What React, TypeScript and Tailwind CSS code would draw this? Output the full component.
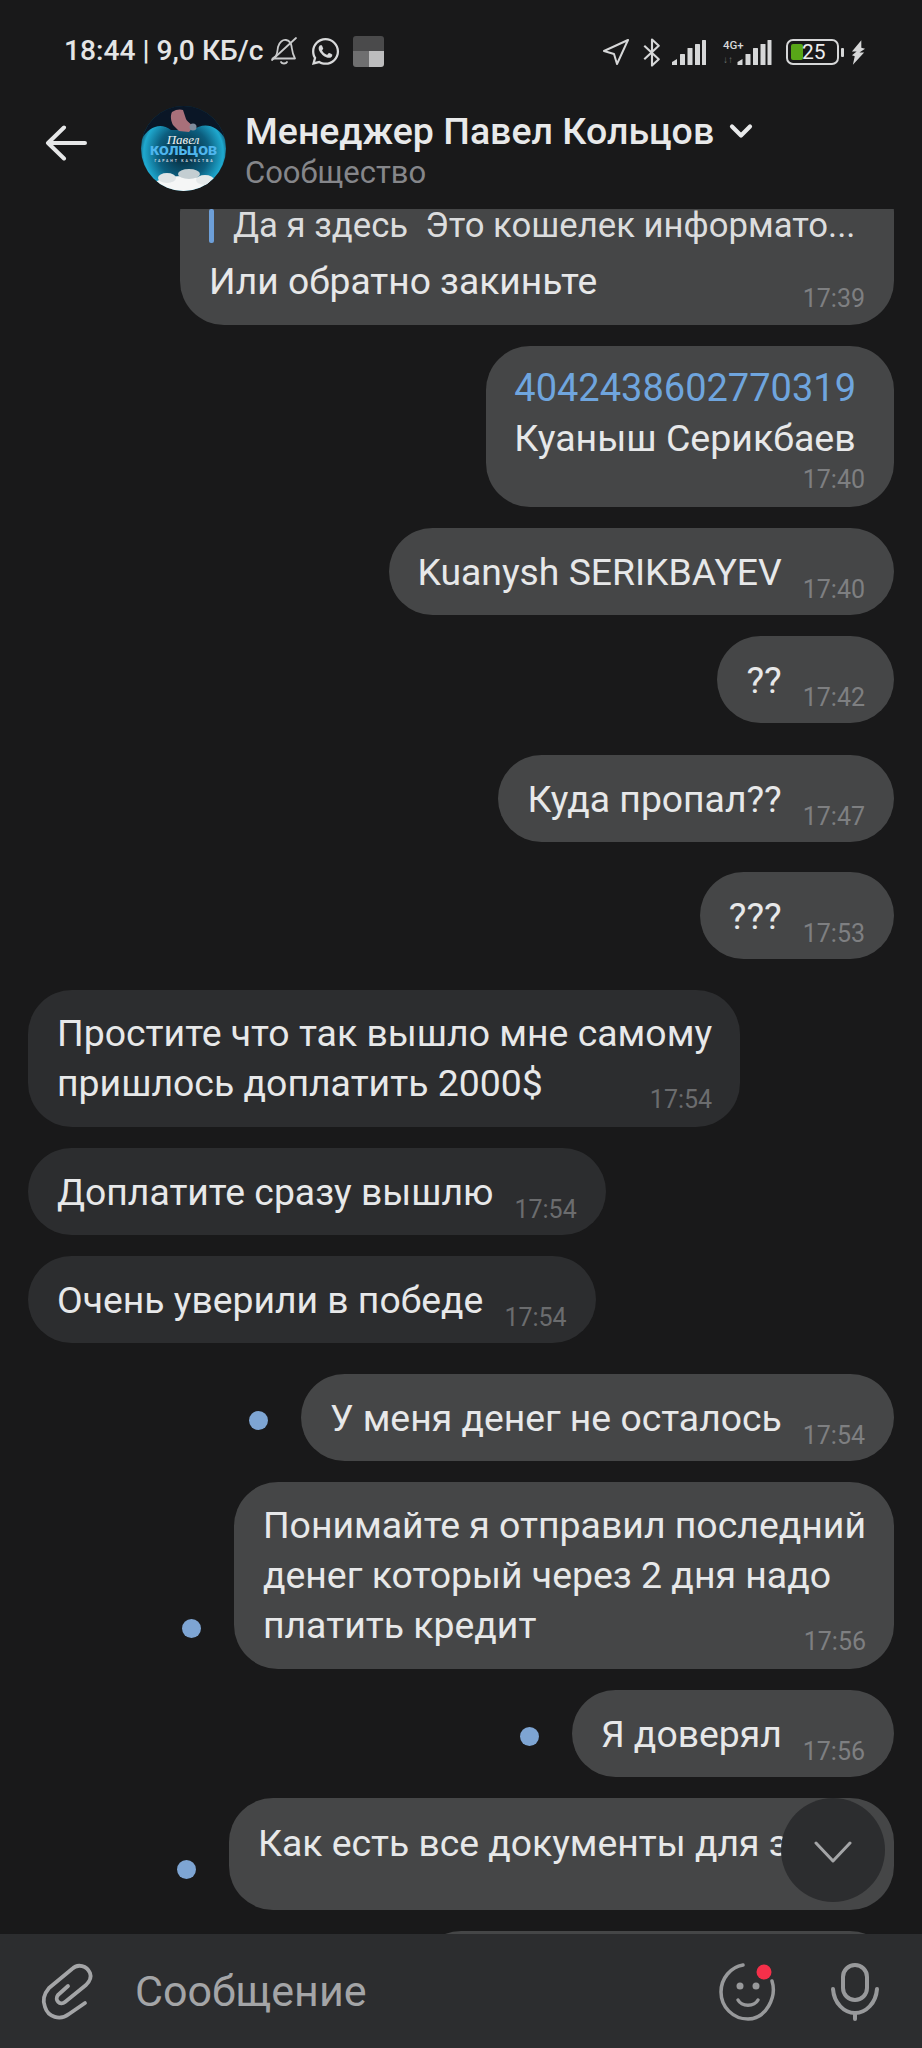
import { ChevronDown } from "lucide-react"
import { FaWhatsapp } from "react-icons/fa"

const font = "font-['Roboto',sans-serif]"

function Signal({ className = "" }: { className?: string }) {
  return (
    <svg viewBox="0 0 34 25" className={className} fill="#d6d7d8">
      <path d="M0 25v-3l5-3v6z" />
      <rect x="8" y="14" width="5" height="11" rx="0.5" />
      <rect x="15.500" y="8" width="5" height="17" rx="0.5" />
      <rect x="23" y="4" width="5" height="21" rx="0.5" />
      <rect x="30" y="0" width="4" height="25" rx="0.5" />
    </svg>
  )
}

function StatusBar() {
  return (
    <div className="h-[66px] pt-[34px] pl-[64px] pr-[56px] flex items-start justify-between">
      <div className="flex items-center h-[34px]">
        <span className="text-[28.2px] leading-[34px] font-medium text-[#e4e5e6] whitespace-pre">18:44 | 9,0 КБ/с</span>
        <svg viewBox="0 0 28 30" className="ml-[7px] w-[28px] h-[30px]" fill="none" stroke="#c9cacb" strokeWidth="1.8" strokeLinejoin="round" strokeLinecap="round">
          <path d="M6 20c1.500-3 1.500-6 2-9 1-5 5-7.500 8-7 3 .5 5 3 5.500 6 .5 3 .5 7 3.500 12.500H2.500C4 21.500 5 21 6 20z" />
          <path d="M2 24 26 2" />
          <path d="M11 26c1 2 5 2 6 0" />
        </svg>
        <FaWhatsapp className="ml-[12px] w-[31px] h-[31px] text-[#d8d9da]" />
        <div className="ml-[12px] w-[31px] h-[31px] rounded-[3px] overflow-hidden grid grid-cols-2 grid-rows-2">
          <div className="col-span-2 bg-[#4a4a4b]" />
          <div className="bg-[#6f6f70]" />
          <div className="bg-[#bdbdbe]" />
        </div>
      </div>
      <div className="flex items-center h-[34px] pt-[2px]">
        <svg viewBox="0 0 26 26" className="w-[26px] h-[26px]" fill="none" stroke="#d6d7d8" strokeWidth="2" strokeLinejoin="round">
          <path d="M25 1 1 12l10 3 3 10z" />
        </svg>
        <svg viewBox="0 0 18 30" className="ml-[14px] w-[18px] h-[29px]" fill="none" stroke="#d6d7d8" strokeWidth="2.200" strokeLinejoin="round">
          <path d="M1 8l15 14-7 6.500V1.500L16 8 1 22" />
        </svg>
        <Signal className="ml-[11px] w-[34px] h-[25px]" />
        <div className="ml-[17px] relative w-[49px] h-[25px]">
          <span className="absolute left-0 -top-[1px] text-[11.5px] leading-[12px] font-medium text-[#d6d7d8]">4G+</span>
          <span className="absolute left-0 bottom-0 text-[10px] leading-[10px] text-[#6f7071]">↓↑</span>
          <Signal className="absolute right-0 bottom-0 w-[35px] h-[25px]" />
        </div>
        <div className="ml-[14px] w-[53px] h-[26px] rounded-[7px] border-[2.500px] border-[#d6d7d8] flex items-center px-[3px]">
          <div className="w-[12px] h-[16px] bg-[#58a618] rounded-[2px]" />
          <span className="text-[21px] leading-[21px] text-[#eeeeef] -ml-[1px]">25</span>
        </div>
        <div className="ml-[2px] w-[3px] h-[9px] bg-[#d6d7d8] rounded-[1px]" />
        <svg viewBox="0 0 16 26" className="ml-[7px] w-[15px] h-[25px]" fill="#d6d7d8">
          <path d="M11 0 1 12h5L1 16l3 1-2 9 12-13H9l6-4-4-1z" />
        </svg>
      </div>
    </div>
  )
}

function Avatar() {
  return (
    <svg viewBox="0 0 85 85" className="w-[85px] h-[85px] shrink-0 rounded-full">
      <defs>
        <radialGradient id="glow" cx="50%" cy="55%" r="55%">
          <stop offset="0%" stopColor="#06202e" />
          <stop offset="55%" stopColor="#0c5f80" />
          <stop offset="85%" stopColor="#1fa9cf" />
          <stop offset="100%" stopColor="#0a3a50" />
        </radialGradient>
      </defs>
      <rect width="85" height="85" fill="url(#glow)" />
      <path d="M0 0h85v34C76 18 62 16 52 24L30 24C20 16 8 20 0 34z" fill="#0a1626" />
      <path d="M31 6c4-3 9-3 11-2l3 9c1 3 6 5 7 8l-4 5-10-1-6-6c-2-4-3-9-1-13z" fill="#a8707a" />
      <circle cx="52" cy="21" r="3.500" fill="#7f8b9c" />
      <text x="42" y="38" textAnchor="middle" fontFamily="Liberation Serif, serif" fontStyle="italic" fontSize="13" fill="#f2f2f2">Павел</text>
      <text x="42.500" y="49" textAnchor="middle" fontFamily="Roboto, sans-serif" fontWeight="900" fontSize="12" fill="#4fb6ee" textLength="67" lengthAdjust="spacingAndGlyphs">КОЛЬЦОВ</text>
      <text x="42.500" y="55.500" textAnchor="middle" fontFamily="Roboto, sans-serif" fontWeight="700" fontSize="3.500" fill="#d5dde3" textLength="58" lengthAdjust="spacing">ГАРАНТ КАЧЕСТВА</text>
      <ellipse cx="42" cy="82" rx="32" ry="12" fill="#f5f6f6" />
      <ellipse cx="26" cy="72" rx="9" ry="5" fill="#dfe4e6" />
      <ellipse cx="48" cy="68" rx="11" ry="5" fill="#c4ced2" />
      <ellipse cx="64" cy="74" rx="9" ry="5" fill="#e5e9ea" />
    </svg>
  )
}

function Header() {
  return (
    <div className="h-[143px] flex items-start pl-[45px]">
      <svg viewBox="0 0 42 36" className="mt-[59px] w-[42px] h-[36px] shrink-0" fill="none" stroke="#e6e7e8" strokeWidth="4" strokeLinecap="round" strokeLinejoin="round">
        <path d="M3 18h37M19 2.500 3 18l16 15.500" />
      </svg>
      <div className="ml-[54px] mt-[40px]">
        <Avatar />
      </div>
      <div className="ml-[19px] mt-[44px]">
        <div className="flex items-center h-[42px]">
          <span className="text-[37.5px] leading-[42px] font-medium text-[#e8e9ea] whitespace-nowrap">Менеджер Павел Кольцов</span>
          <ChevronDown className="ml-[9px] w-[36px] h-[36px] text-[#e8e9ea]" strokeWidth={2.8} />
        </div>
        <div className="text-[31px] leading-[36px] text-[#85868a] mt-[3px] whitespace-nowrap">Сообщество</div>
      </div>
    </div>
  )
}

function Time({ side, children }: { side: "in" | "out"; children: string }) {
  return (
    <span className={`block text-[25px] leading-[30px] shrink-0 whitespace-nowrap ${side === "out" ? "text-[#7e7f81]" : "text-[#6b6c6e]"}`}>
      {children}
    </span>
  )
}

function Dot() {
  return <div className="w-[19px] h-[19px] rounded-full bg-[#7ea5d3] mb-[31px]" />
}

type BubbleProps = {
  side: "in" | "out"
  time: string
  lines: string[]
  dot?: boolean
}

function Bubble({ side, time, lines, dot }: BubbleProps) {
  const bg = side === "out" ? "bg-[#454647]" : "bg-[#2c2d2f]"
  const row = side === "out" ? "justify-end pr-[28px]" : "justify-start pl-[28px]"

  if (lines.length === 1) {
    return (
      <div className={`flex items-end gap-[33px] ${row}`}>
        {dot && <Dot />}
        <div className={`${bg} h-[87px] rounded-[44px] pl-[29px] pr-[29px] flex`}>
          <span className="text-[37.3px] leading-[50px] mt-[19px] text-[#e7e8e9] whitespace-pre">{lines[0]}</span>
          <span className="ml-[21px] mt-[47px]"><Time side={side}>{time}</Time></span>
        </div>
      </div>
    )
  }

  return (
    <div className={`flex items-end gap-[33px] ${row}`}>
      {dot && <Dot />}
      <div className={`${bg} rounded-[44px] pl-[29px] pr-[28px] pt-[18px] pb-[12px] flex flex-col`}>
        {lines.map((l) => (
          <div key={l} className="text-[37.4px] leading-[50px] text-[#e7e8e9] whitespace-pre">{l}</div>
        ))}
        <div className="self-end -mt-[23px]"><Time side={side}>{time}</Time></div>
      </div>
    </div>
  )
}

function Messages() {
  return (
    <div className="flex-1 min-h-0 overflow-hidden flex flex-col">
      <div className="flex justify-end pr-[28px] -mt-[40px]">
        <div className="bg-[#454647] w-[714px] rounded-[44px] pl-[29px] pr-[29px] pt-[40px] pb-[11px] flex flex-col">
          <div className="flex items-start h-[34px]">
            <div className="w-[5px] h-[34px] bg-[#6d9fd8] rounded-[2px]" />
            <span className="ml-[19px] text-[34.7px] leading-[32px] text-[#dcddde] whitespace-pre">Да я здесь  Это кошелек информато...</span>
          </div>
          <div className="mt-[13px] text-[37.2px] leading-[50px] text-[#e7e8e9]">Или обратно закиньте</div>
          <div className="self-end -mt-[22px]"><Time side="out">17:39</Time></div>
        </div>
      </div>

      <div className="mt-[21px] flex justify-end pr-[28px]">
        <div className="bg-[#454647] rounded-[44px] pl-[28px] pr-[38px] pt-[17px] pb-[12px] flex flex-col">
          <div className="text-[38px] leading-[50px] text-[#6fa5de] whitespace-pre">4042438602770319</div>
          <div className="text-[37.5px] leading-[50px] text-[#e7e8e9] whitespace-pre">Куаныш Серикбаев</div>
          <div className="self-end -mr-[9px] mt-[2px]"><Time side="out">17:40</Time></div>
        </div>
      </div>

      <div className="mt-[21px] flex flex-col gap-[21px]">
        <Bubble side="out" lines={["Kuanysh SERIKBAYEV"]} time="17:40" />
        <Bubble side="out" lines={["??"]} time="17:42" />
      </div>
      <div className="mt-[32px]">
        <Bubble side="out" lines={["Куда пропал??"]} time="17:47" />
      </div>
      <div className="mt-[30px]">
        <Bubble side="out" lines={["???"]} time="17:53" />
      </div>

      <div className="mt-[31px] flex flex-col gap-[21px]">
        <Bubble side="in" lines={["Простите что так вышло мне самому", "пришлось доплатить 2000$"]} time="17:54" />
        <Bubble side="in" lines={["Доплатите сразу вышлю"]} time="17:54" />
        <Bubble side="in" lines={["Очень уверили в победе"]} time="17:54" />
      </div>

      <div className="mt-[31px] flex flex-col gap-[21px]">
        <Bubble side="out" dot lines={["У меня денег не осталось"]} time="17:54" />
        <Bubble side="out" dot lines={["Понимайте я отправил последний", "денег который через 2 дня надо", "платить кредит"]} time="17:56" />
        <Bubble side="out" dot lines={["Я доверял"]} time="17:56" />
        <div className="flex items-end justify-end gap-[33px] pr-[28px]">
          <Dot />
          <div className="bg-[#454647] w-[665px] h-[112px] rounded-[44px] pl-[29px] pt-[20px]">
            <span className="block text-[37.3px] leading-[50px] text-[#e7e8e9] whitespace-pre">Как есть все документы для з</span>
          </div>
        </div>
        <div className="self-end mr-[28px] bg-[#454647] w-[477px] h-[60px] rounded-t-[44px]" />
      </div>
    </div>
  )
}

function Footer() {
  return (
    <div className="h-[114px] shrink-0 bg-[#2c2d2f] flex items-center pl-[30px] pr-[42px]">
      <svg viewBox="0 0 80 80" className="w-[80px] h-[80px] shrink-0" fill="none" stroke="#a4a5a7" strokeWidth="3.800" strokeLinecap="round" strokeLinejoin="round">
        <path d="M55 52 39 63C30 70 18 66 15 56 12 49 14 43 19 37L42 18C48 12 57 15 60 22 62 27 59 31 56 34L35 51C30 55 24 49 28 44L38 35" />
      </svg>
      <span className="ml-[25px] text-[43px] leading-[50px] text-[#a4a5a7]">Сообщение</span>
      <svg viewBox="0 0 76 80" className="ml-auto w-[76px] h-[80px] shrink-0" fill="none" stroke="#98999b" strokeWidth="3.500" strokeLinecap="round">
        <path d="M62 30C67 46 56 68 38 68 23 68 11 56 11 41 11 27 21 16 33 14" />
        <path d="M28 49c4 7 16 7 20 0" />
        <circle cx="30" cy="35" r="3.500" fill="#98999b" stroke="none" />
        <circle cx="46" cy="35" r="3.500" fill="#98999b" stroke="none" />
        <circle cx="54" cy="21" r="7.500" fill="#f5304a" stroke="none" />
      </svg>
      <svg viewBox="0 0 50 80" className="ml-[44px] w-[50px] h-[80px] shrink-0" fill="none" stroke="#98999b" strokeWidth="4" strokeLinecap="round">
        <rect x="13" y="14" width="24" height="35" rx="12" />
        <path d="M3 38c1 14 11 24 22 24s21-10 22-24" />
        <path d="M25 62v6" />
      </svg>
    </div>
  )
}

export default function App() {
  return (
    <div className={`relative w-[922px] h-[2048px] overflow-hidden bg-[#19191a] flex flex-col ${font}`}>
      <div className="relative z-10 h-[209px] shrink-0 bg-[#19191a]">
        <StatusBar />
        <Header />
      </div>
      <Messages />
      <Footer />
      {/* scroll-down button sits over the last bubble */}
      <div className="absolute left-[781px] top-[1798px] w-[104px] h-[104px] rounded-full bg-[#2c2d2f] flex items-center justify-center">
        <svg viewBox="0 0 38 24" className="w-[38px] h-[24px] mt-[4px]" fill="none" stroke="#a4a5a7" strokeWidth="3" strokeLinecap="round" strokeLinejoin="round">
          <path d="M2 3l17 18L36 3" />
        </svg>
      </div>
    </div>
  )
}
